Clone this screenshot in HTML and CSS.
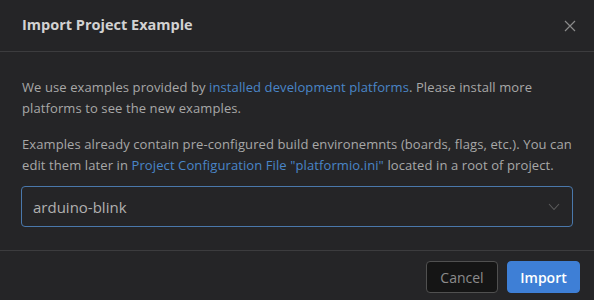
FILE: index.html
```html
<!DOCTYPE html>
<html lang="en">

<head>
    <meta charset="UTF-8">
    <meta name="viewport" content="width=device-width, initial-scale=1.0">
    <title>Import Project Example</title>
    <link rel="stylesheet" href="styles.css">
</head>

<body>

    <div class="modal">

        <!-- Header -->
        <div class="modal-header">
            <h1>Import Project Example</h1>
            <button class="close" aria-label="Close">
                <svg width="12" height="12" viewBox="0 0 12 12">
                    <path d="M1 1 L11 11 M11 1 L1 11" stroke="#8a8a8a" stroke-width="1.2" fill="none"/>
                </svg>
            </button>
        </div>

        <!-- Body -->
        <div class="modal-body">
            <p>We use examples provided by <a href="#">installed development platforms</a>. Please install more platforms to see the new examples.</p>
            <p>Examples already contain pre-configured build environemnts (boards, flags, etc.). You can edit them later in <a href="#">Project Configuration File "platformio.ini"</a> located in a root of project.</p>

            <div class="select">
                <span>arduino-blink</span>
                <svg width="12" height="8" viewBox="0 0 12 8">
                    <path d="M1 1 L6 6.5 L11 1" stroke="#5c5c5c" stroke-width="1.1" fill="none"/>
                </svg>
            </div>
        </div>

        <!-- Footer -->
        <div class="modal-footer">
            <button class="btn">Cancel</button>
            <button class="btn btn-primary">Import</button>
        </div>

    </div>

</body>
</html>
```

FILE: styles.css
```css
:root {
    --bg:       #252527;
    --border:   #3c3c3e;
    --text:     #a8a8a8;
    --title:    #d2d2d2;
    --link:     #4a86c8;
    --blue:     #3e7fd6;
}

* {
    box-sizing: border-box;
    margin: 0;
    padding: 0;
}

body {
    background: var(--bg);
    color: var(--text);
    font-family: 'Open Sans', sans-serif;
    font-size: 13px;
    width: 594px;
    height: 300px;
    overflow: hidden;
}

/* ── Header ── */
.modal-header {
    display: flex;
    align-items: center;
    justify-content: space-between;
    height: 52px;
    padding: 0 18px 0 22px;
    border-bottom: 1px solid var(--border);
}

.modal-header h1 {
    font-size: 14.5px;
    font-weight: 700;
    color: var(--title);
    padding-bottom: 2px;
}

.close {
    background: none;
    border: none;
    display: flex;
}

/* ── Body ── */
.modal-body {
    padding: 25px 22px 0 22px;
    height: 199px;
    border-bottom: 1px solid var(--border);
}

.modal-body p {
    line-height: 21px;
    letter-spacing: 0.1px;
    margin-bottom: 15px;
}

.modal-body a {
    color: var(--link);
    text-decoration: none;
}

.select {
    display: flex;
    align-items: center;
    justify-content: space-between;
    height: 41px;
    margin: -5px -1px 0 -1px;
    padding: 0 12px 0 11px;
    border: 1px solid #4a78ab;
    border-radius: 4px;
    font-size: 15px;
    color: #b0b0b0;
}

/* ── Footer ── */
.modal-footer {
    display: flex;
    justify-content: flex-end;
    gap: 9px;
    padding: 10px 14px 0 0;
}

.btn {
    height: 32px;
    width: 72px;
    border-radius: 4px;
    border: 1px solid #505050;
    background: #151515;
    color: #8c8c8c;
    font-family: 'Open Sans', sans-serif;
    font-size: 14px;
}

.btn-primary {
    width: 73px;
    background: var(--blue);
    border-color: var(--blue);
    color: #fff;
    font-weight: 600;
}
```
